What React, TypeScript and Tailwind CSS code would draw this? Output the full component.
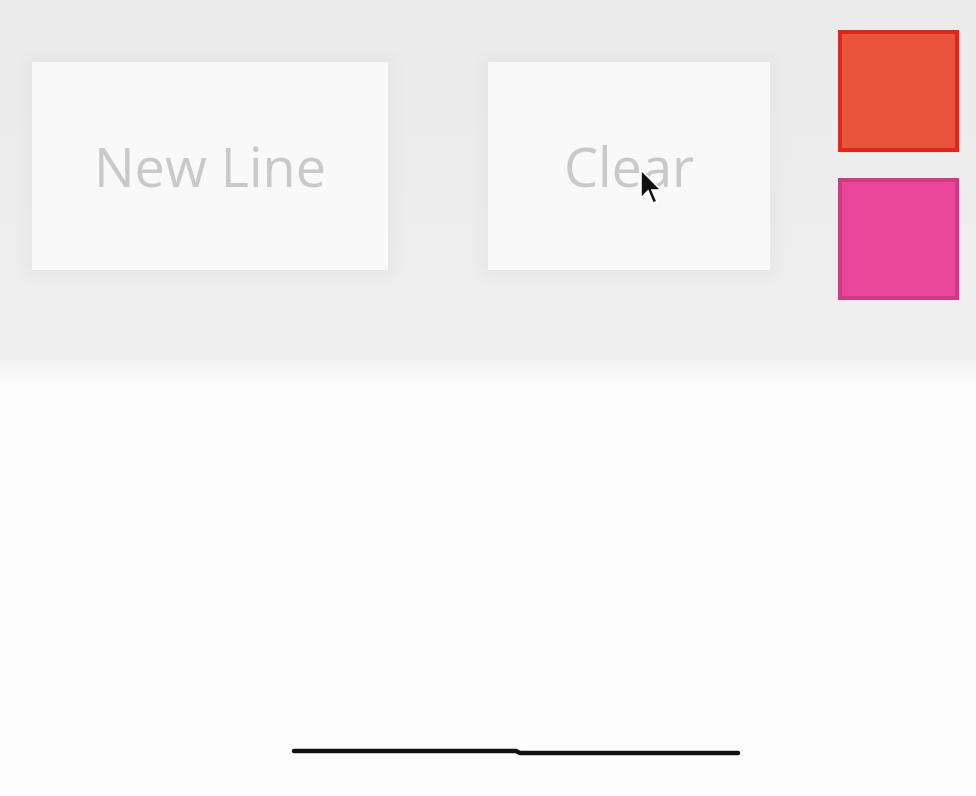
import React from "react";

const font = { fontFamily: '"Open Sans", "Noto Sans", sans-serif' };

const ToolButton = ({ label, width }: { label: string; width: string }) => (
  <button
    className={`${width} h-[208px] mt-[32px] bg-[#f9f9f9] flex items-center justify-center text-[54px] text-[#c9c9c9] shadow-[0_0_16px_6px_rgba(0,0,0,0.035)]`}
    style={font}
  >
    {label}
  </button>
);

const Swatch = ({ border, fill }: { border: string; fill: string }) => (
  <div className={`w-[121px] h-[122px] border-[4px] ${border} ${fill}`} />
);

export default function App() {
  return (
    <div className="w-[976px] h-[796px] bg-[#fdfdfd] flex flex-col overflow-hidden relative">
      {/* Toolbar */}
      <div className="h-[360px] bg-gradient-to-b from-[#ebebeb] to-[#efefef] flex items-start pt-[30px] pl-[32px]">
        <ToolButton label="New Line" width="w-[356px]" />
        <div className="ml-[100px]">
          <ToolButton label="Clear" width="w-[282px]" />
        </div>
        <div className="ml-[68px] flex flex-col gap-[26px]">
          <Swatch border="border-[#e0281a]" fill="bg-[#e9553c]" />
          <Swatch border="border-[#cf3b82]" fill="bg-[#ea479a]" />
        </div>
      </div>
      <div className="h-[25px] bg-gradient-to-b from-[#f1f1f1] to-[#fdfdfd]" />

      {/* Drawing canvas */}
      <div className="flex-1 relative">
        <svg className="absolute inset-0" width="976" height="411">
          <polyline
            points="294,366 516,366 520,368 738,368"
            fill="none"
            stroke="#111"
            strokeWidth="4.5"
            strokeLinecap="round"
          />
        </svg>
      </div>

      {/* Mouse cursor */}
      <svg className="absolute left-[639px] top-[168px]" width="24" height="38" viewBox="0 0 12 19">
        <path d="M1 1 L1 15 L4.5 11.5 L7 17.5 L9 16.7 L6.5 11 L11 11 Z" fill="#111" stroke="#fff" strokeWidth="0.8" />
      </svg>
    </div>
  );
}
